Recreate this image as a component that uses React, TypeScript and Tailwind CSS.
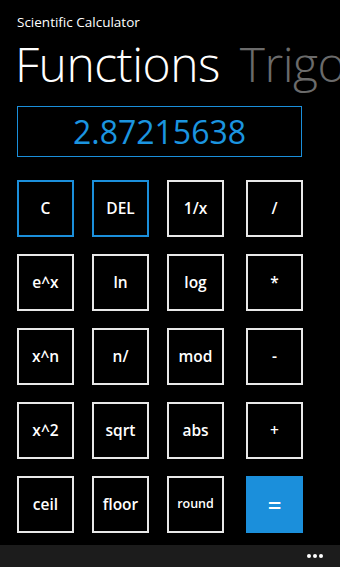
import React from "react";

const rows: string[][] = [
  ["C", "DEL", "1/x", "/"],
  ["e^x", "ln", "log", "*"],
  ["x^n", "n/", "mod", "-"],
  ["x^2", "sqrt", "abs", "+"],
  ["ceil", "floor", "round", "="],
];

function Btn({ label, col }: { label: string; col: number }) {
  const blueBorder = label === "C" || label === "DEL";
  const eq = label === "=";
  const base =
    "w-[57px] h-[57px] flex items-center justify-center font-semibold text-white";
  const cls = eq
    ? "bg-[#1b8fdb] border-2 border-[#1b8fdb] text-[24px]"
    : blueBorder
    ? "border-2 border-[#1b8fdb] text-[15.5px]"
    : label === "round"
    ? "border-2 border-[#e8e8e8] text-[12.5px]"
    : "border-2 border-[#e8e8e8] text-[15.5px]";
  return (
    <div className={`${base} ${cls} ${col === 3 ? "ml-[4px]" : ""}`}>
      <span className="leading-none">{label}</span>
    </div>
  );
}

export default function App() {
  return (
    <div
      className="w-[340px] h-[567px] bg-black overflow-hidden flex flex-col text-white"
      style={{ fontFamily: '"Open Sans", "Noto Sans", sans-serif' }}
    >
      <div className="pl-[17px] pt-[13px] text-[13.5px] leading-[18px] whitespace-nowrap">
        Scientific Calculator
      </div>
      <div className="pl-[15px] mt-[3px] h-[62px] overflow-hidden whitespace-nowrap text-[48px] leading-[60px] font-light tracking-[-0.5px] flex">
        <span className="shrink-0">Functions</span>
        <span className="shrink-0 ml-[20px] text-[#6b6b6b]">Trigonometry</span>
      </div>
      <div className="ml-[17px] mt-[10px] w-[285px] h-[51px] border border-[#1b8fdb] flex items-center justify-center">
        <span className="text-[#1b95e0] text-[32px] leading-none">2.87215638</span>
      </div>
      <div className="flex flex-col gap-[17px] pl-[17px] mt-[23px]">
        {rows.map((r, i) => (
          <div key={i} className="flex gap-[18px]">
            {r.map((l, j) => (
              <Btn key={j} label={l} col={j} />
            ))}
          </div>
        ))}
      </div>
      <div className="mt-auto h-[22px] bg-[#1c1c1c] flex items-center justify-end pr-[17px] gap-[2px]">
        <span className="w-[4px] h-[4px] rounded-full bg-white" />
        <span className="w-[4px] h-[4px] rounded-full bg-white" />
        <span className="w-[4px] h-[4px] rounded-full bg-white" />
      </div>
    </div>
  );
}
